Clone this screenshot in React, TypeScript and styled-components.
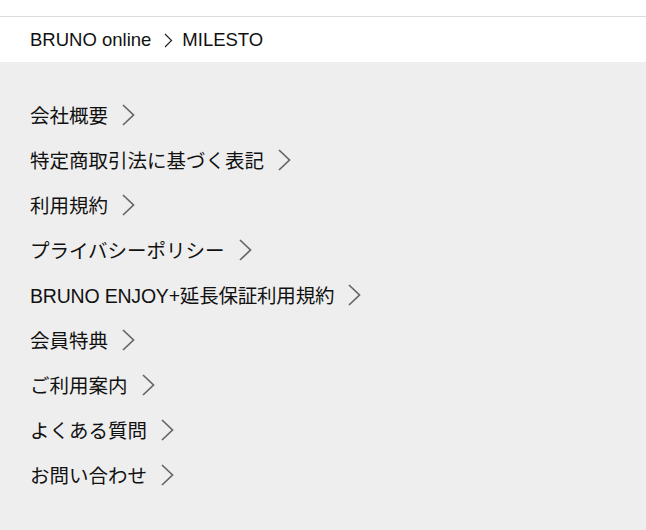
import React, { FC } from "react"
import styled, { createGlobalStyle } from "styled-components"

const GlobalStyle = createGlobalStyle`
  html, body {
    margin: 0;
    padding: 0;
    background: #eeeeee;
  }
  body {
    font-family: "Liberation Sans", "Noto Sans CJK JP", sans-serif;
    color: #111;
  }
`

const Page = styled.div`
  display: flex;
  flex-direction: column;
  min-height: 530px;
`

const TopBar = styled.div`
  height: 16px;
  background: #fff;
  border-bottom: 1px solid #dcdcdc;
`

const Breadcrumb = styled.nav`
  display: flex;
  align-items: center;
  height: 45px;
  padding: 1px 30px 0;
  box-sizing: border-box;
  background: #fff;
  font-size: 18.5px;
`

const Crumb = styled.span`
  white-space: nowrap;
`

const CrumbSep = styled.span`
  display: flex;
  margin: 0 9px 0 13px;
`

const Menu = styled.ul`
  list-style: none;
  margin: 0;
  padding: 30px 30px 0;
  display: flex;
  flex-direction: column;
`

const Item = styled.li`
  display: flex;
  align-items: center;
  height: 45px;
  font-size: 19.5px;
  gap: 14px;
`

const Label = styled.span<{ $latin?: boolean }>`
  letter-spacing: ${ p => (p.$latin ? "-0.2px" : "0") };
`

const Arrow: FC<{ w: number; h: number; color: string; stroke: number }> = ({ w, h, color, stroke }) => (
  <svg width={ w } height={ h } viewBox={ `0 0 ${ w } ${ h }` } fill="none">
    <polyline points={ `1,1 ${ w - 1.5 },${ h / 2 } 1,${ h - 1 }` } stroke={ color } strokeWidth={ stroke } />
  </svg>
)

const items = [
  "会社概要",
  "特定商取引法に基づく表記",
  "利用規約",
  "プライバシーポリシー",
  "BRUNO ENJOY+延長保証利用規約",
  "会員特典",
  "ご利用案内",
  "よくある質問",
  "お問い合わせ"
]

const App: FC = () => (
  <Page>
    <GlobalStyle />
    <TopBar />
    <Breadcrumb>
      <Crumb>BRUNO online</Crumb>
      <CrumbSep><Arrow w={ 9 } h={ 15 } color="#222" stroke={ 1.2 } /></CrumbSep>
      <Crumb>MILESTO</Crumb>
    </Breadcrumb>
    <Menu>
      { items.map(item => (
        <Item key={ item }>
          <Label $latin={ /[A-Z]/.test(item) }>{ item }</Label>
          <Arrow w={ 13 } h={ 22 } color="#666" stroke={ 1.7 } />
        </Item>
      )) }
    </Menu>
  </Page>
)

export default App
